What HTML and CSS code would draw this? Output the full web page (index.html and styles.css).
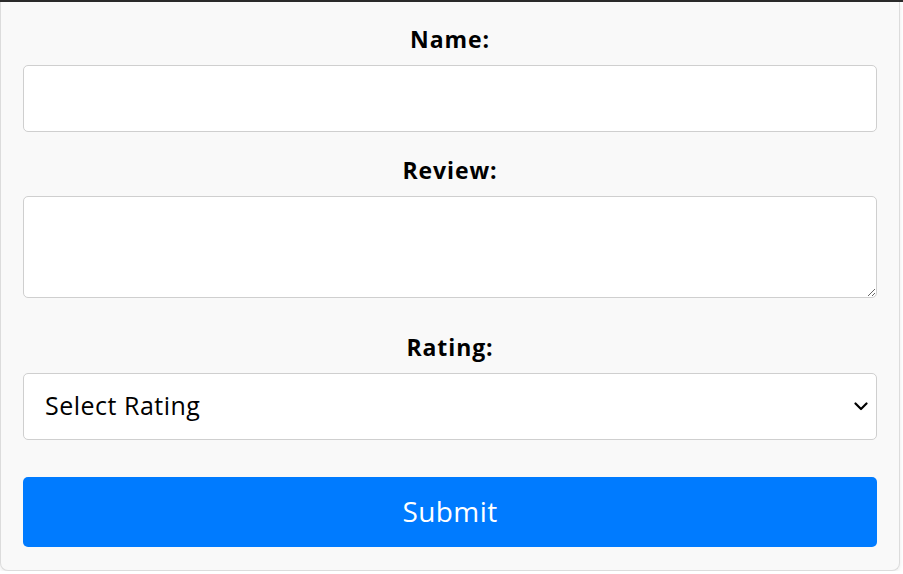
FILE: index.html
```html
<!DOCTYPE html>
<html lang="en">
<head>
<meta charset="utf-8">
<title>Review Form</title>
<link rel="stylesheet" href="styles.css">
</head>
<body>
<div class="topbar"></div>
<form class="card">
  <div class="field">
    <label class="label" for="name">Name:</label>
    <input class="input" id="name" type="text">
  </div>
  <div class="field">
    <label class="label" for="review">Review:</label>
    <textarea class="input textarea" id="review"></textarea>
  </div>
  <div class="field field-rating">
    <label class="label" for="rating">Rating:</label>
    <div class="select-wrap">
      <select class="input select" id="rating">
        <option>Select Rating</option>
        <option>1</option>
        <option>2</option>
        <option>3</option>
        <option>4</option>
        <option>5</option>
      </select>
      <svg class="chevron" width="14" height="9" viewBox="0 0 14 9"><path d="M1.5 1.5 L7 7 L12.5 1.5" fill="none" stroke="#000" stroke-width="2.2" stroke-linecap="round" stroke-linejoin="round"/></svg>
    </div>
  </div>
  <button class="submit" type="button">Submit</button>
</form>
</body>
</html>
```
FILE: styles.css
```css
* { box-sizing: border-box; }
html, body { margin: 0; padding: 0; }
body {
  background: #ffffff;
  font-family: "Open Sans", "Noto Sans", sans-serif;
  color: #000;
}
.topbar {
  height: 2px;
  background: #2b2b2b;
}
.card {
  width: 900px;
  background: #f9f9f9;
  border: 1px solid #dcdcdc;
  border-top: none;
  border-radius: 0 0 8px 8px;
  box-shadow: 0 2px 4px rgba(0,0,0,0.08);
  padding: 23px 22px 23px;
  display: flex;
  flex-direction: column;
}
.field {
  display: flex;
  flex-direction: column;
  margin-bottom: 24px;
}
.field-rating { margin-bottom: 37px; }
.field:nth-child(2) { margin-bottom: 35px; }
.label {
  display: block;
  text-align: center;
  font-weight: 700;
  font-size: 23px;
  letter-spacing: 0.9px;
  line-height: 28px;
  margin-bottom: 12px;
}
.input {
  display: block;
  width: 100%;
  height: 67px;
  background: #fff;
  border: 1px solid #cfcfcf;
  border-radius: 5px;
  font-family: inherit;
  font-size: 25px;
  letter-spacing: 0.5px;
  padding: 0 21px 3px;
  margin: 0;
  outline: none;
}
.textarea {
  height: 102px;
  padding: 10px 21px;
  resize: vertical;
}
.select-wrap { position: relative; }
.select {
  appearance: none;
  -webkit-appearance: none;
  color: #000;
}
.chevron {
  position: absolute;
  right: 9px;
  top: 29px;
  pointer-events: none;
}
.submit {
  display: block;
  width: 100%;
  height: 70px;
  border: none;
  border-radius: 5px;
  background: #007bff;
  color: #fff;
  font-family: inherit;
  font-size: 28px;
  letter-spacing: 0.4px;
  padding: 0 0 3px;
  cursor: pointer;
}
```
